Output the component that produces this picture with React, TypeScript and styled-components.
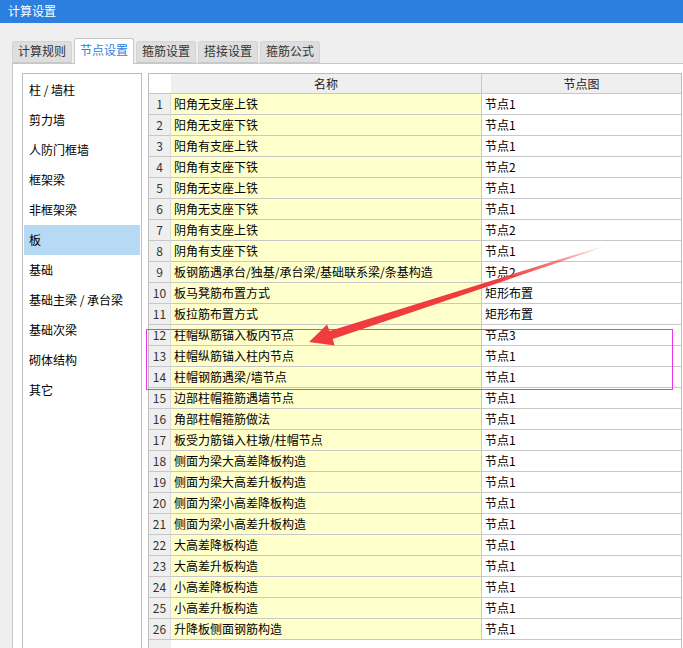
import * as React from 'react'
import styled, { createGlobalStyle } from 'styled-components'

const GlobalStyle = createGlobalStyle`
  html, body {
    margin: 0;
    padding: 0;
    background: #efefef;
    overflow: hidden;
  }
  body {
    font-family: "Noto Sans CJK SC", "Microsoft YaHei", sans-serif;
    font-size: 12px;
    color: #000;
  }
`

type Row = { name: string; node: string }

const rows: Row[] = [
  { name: '阳角无支座上铁', node: '节点1' },
  { name: '阳角无支座下铁', node: '节点1' },
  { name: '阳角有支座上铁', node: '节点1' },
  { name: '阳角有支座下铁', node: '节点2' },
  { name: '阴角无支座上铁', node: '节点1' },
  { name: '阴角无支座下铁', node: '节点1' },
  { name: '阴角有支座上铁', node: '节点2' },
  { name: '阴角有支座下铁', node: '节点1' },
  { name: '板钢筋遇承台/独基/承台梁/基础联系梁/条基构造', node: '节点2' },
  { name: '板马凳筋布置方式', node: '矩形布置' },
  { name: '板拉筋布置方式', node: '矩形布置' },
  { name: '柱帽纵筋锚入板内节点', node: '节点3' },
  { name: '柱帽纵筋锚入柱内节点', node: '节点1' },
  { name: '柱帽钢筋遇梁/墙节点', node: '节点1' },
  { name: '边部柱帽箍筋遇墙节点', node: '节点1' },
  { name: '角部柱帽箍筋做法', node: '节点1' },
  { name: '板受力筋锚入柱墩/柱帽节点', node: '节点1' },
  { name: '侧面为梁大高差降板构造', node: '节点1' },
  { name: '侧面为梁大高差升板构造', node: '节点1' },
  { name: '侧面为梁小高差降板构造', node: '节点1' },
  { name: '侧面为梁小高差升板构造', node: '节点1' },
  { name: '大高差降板构造', node: '节点1' },
  { name: '大高差升板构造', node: '节点1' },
  { name: '小高差降板构造', node: '节点1' },
  { name: '小高差升板构造', node: '节点1' },
  { name: '升降板侧面钢筋构造', node: '节点1' },
]

const tabs = ['计算规则', '节点设置', '箍筋设置', '搭接设置', '箍筋公式']
const categories = [
  '柱 / 墙柱',
  '剪力墙',
  '人防门框墙',
  '框架梁',
  '非框架梁',
  '板',
  '基础',
  '基础主梁 / 承台梁',
  '基础次梁',
  '砌体结构',
  '其它',
]

const Window = styled.div`
  position: relative;
  width: 683px;
  height: 648px;
  display: flex;
  flex-direction: column;
  overflow: hidden;
`

const TitleBar = styled.div`
  height: 23px;
  line-height: 22px;
  padding-left: 8px;
  background: #2c7fdf;
  color: #fff;
  font-size: 12px;
  flex-shrink: 0;
`

const Body = styled.div`
  flex: 1;
  display: flex;
  flex-direction: column;
  padding: 15px 0 0 12px;
  min-height: 0;
`

const TabStrip = styled.div`
  display: flex;
  align-items: flex-end;
  gap: 2px;
  height: 25px;
  flex-shrink: 0;
`

const Tab = styled.div<{ $active?: boolean }>`
  box-sizing: border-box;
  height: ${(p) => (p.$active ? '26px' : '22px')};
  padding: 0 5px ${(p) => (p.$active ? '4px' : '1px')};
  margin-bottom: ${(p) => (p.$active ? '-1px' : '0')};
  display: flex;
  align-items: flex-end;
  line-height: 20px;
  border: 1px solid ${(p) => (p.$active ? '#c8c8c8' : '#d4d4d4')};
  border-bottom: ${(p) => (p.$active ? 'none' : '1px solid #c8c8c8')};
  border-radius: 3px 3px 0 0;
  background: ${(p) => (p.$active ? '#fff' : '#dedede')};
  color: ${(p) => (p.$active ? '#2c7fdf' : '#333')};
  position: ${(p) => (p.$active ? 'relative' : 'static')};
  z-index: 1;
`

const Panel = styled.div`
  flex: 1;
  min-height: 0;
  display: flex;
  gap: 6px;
  padding: 9px 0 0 9px;
  background: #fff;
  border-top: 1px solid #c8c8c8;
  border-left: 1px solid #c8c8c8;
`

const Sidebar = styled.div`
  box-sizing: border-box;
  width: 120px;
  padding: 1px;
  border: 1px solid #bdbdbd;
  border-bottom: none;
  flex-shrink: 0;
`

const SideItem = styled.div<{ $selected?: boolean }>`
  height: 30px;
  line-height: 30px;
  padding-left: 5px;
  background: ${(p) => (p.$selected ? '#b6daf4' : 'transparent')};
  white-space: nowrap;
`

const TableBox = styled.div`
  box-sizing: border-box;
  width: 534px;
  border: 1px solid #bdbdbd;
  border-bottom: none;
  background: linear-gradient(to right, #efefef 22px, #fff 22px);
  flex-shrink: 0;
`

const GridRow = styled.div<{ $head?: boolean }>`
  display: grid;
  grid-template-columns: 22px 311px 199px;
  height: ${(p) => (p.$head ? '20px' : '21px')};
`

const Cell = styled.div<{ $kind: 'num' | 'name' | 'node' | 'corner' | 'head' }>`
  box-sizing: border-box;
  border-bottom: 1px solid #c8c8c8;
  border-right: ${(p) => (p.$kind === 'node' || p.$kind === 'head' ? '0' : '1px solid #c8c8c8')};
  white-space: nowrap;
  overflow: hidden;
  line-height: 20px;
  ${(p) =>
    p.$kind === 'num'
      ? 'background:#efefef; color:#333; text-align:center; border-right-color:#dcdcdc;'
      : p.$kind === 'name'
      ? 'background:#ffffcc; padding-left:3px;'
      : p.$kind === 'node'
      ? 'background:#fff; padding-left:3px;'
      : p.$kind === 'corner'
      ? 'background:#fff; border-right:none;'
      : 'background:#efefef; text-align:center; line-height:19px; color:#222;'}
`

const HeadCell = styled(Cell)<{ $divider?: boolean }>`
  border-right: ${(p) => (p.$divider ? '1px solid #c8c8c8' : '0')};
`

const Overlay = styled.svg`
  position: absolute;
  left: 0;
  top: 0;
  pointer-events: none;
`

const Annotation: React.FC = () => (
  <Overlay width="683" height="648" viewBox="0 0 683 648">
    <defs>
      <linearGradient id="shaft" gradientUnits="userSpaceOnUse" x1="606" y1="246" x2="330" y2="335">
        <stop offset="0" stopColor="#f03c3c" stopOpacity="0" />
        <stop offset="0.2" stopColor="#f03c3c" stopOpacity="0.7" />
        <stop offset="0.4" stopColor="#f03c3c" stopOpacity="1" />
        <stop offset="1" stopColor="#f03c3c" stopOpacity="1" />
      </linearGradient>
    </defs>
    <rect x="146.5" y="329.5" width="526" height="60" fill="none" stroke="#ea35ea" strokeWidth="1" />
    <path
      d="M309 342 L334.5 345.5 L332.8 339 L605.2 246.6 L604.8 245.4 L329.6 331 L327 324.5 Z"
      fill="url(#shaft)"
    />
  </Overlay>
)

const App: React.FC = () => {
  return (
    <Window>
      <GlobalStyle />
      <TitleBar>计算设置</TitleBar>
      <Body>
        <TabStrip>
          {tabs.map((t, i) => (
            <Tab key={t} $active={i === 1}>
              {t}
            </Tab>
          ))}
        </TabStrip>
        <Panel>
          <Sidebar>
            {categories.map((c) => (
              <SideItem key={c} $selected={c === '板'}>
                {c}
              </SideItem>
            ))}
          </Sidebar>
          <TableBox>
            <GridRow $head>
              <Cell $kind="corner" />
              <HeadCell $kind="head" $divider>
                名称
              </HeadCell>
              <HeadCell $kind="head">节点图</HeadCell>
            </GridRow>
            {rows.map((r, i) => (
              <GridRow key={i}>
                <Cell $kind="num">{i + 1}</Cell>
                <Cell $kind="name">{r.name}</Cell>
                <Cell $kind="node">{r.node}</Cell>
              </GridRow>
            ))}
          </TableBox>
        </Panel>
      </Body>
      <Annotation />
    </Window>
  )
}

export default App
